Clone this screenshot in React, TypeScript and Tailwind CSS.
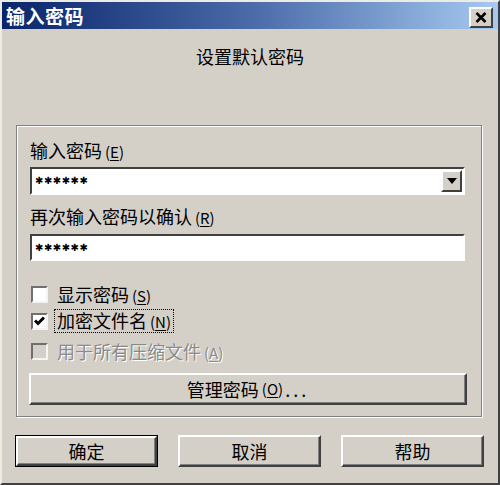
import React from "react";

const cjk = { fontFamily: '"Noto Sans CJK SC", "Noto Sans", sans-serif' };

function Mnemonic({ k }: { k: string }) {
  return (
    <span className="ml-[3px] text-[15px]">
      (<span className="underline underline-offset-2">{k}</span>)
    </span>
  );
}

function Stars() {
  return (
    <span className="pl-[3px] text-[10px] leading-none tracking-[0.5px] text-black" style={{ fontFamily: '"DejaVu Sans", sans-serif' }}>
      ✱✱✱✱✱✱
    </span>
  );
}

function CheckBox({ checked, disabled }: { checked?: boolean; disabled?: boolean }) {
  return (
    <span
      className={`flex h-[17px] w-[17px] shrink-0 items-center justify-center border-2 border-t-[#6f6f6f] border-l-[#6f6f6f] border-r-[#f4f4f4] border-b-[#f4f4f4] ${disabled ? "bg-[#d4d0c8]" : "bg-white"}`}
    >
      {checked && (
        <svg width="11" height="10" viewBox="0 0 11 10">
          <polyline points="1,4.5 4,7.5 10,1.5" fill="none" stroke="#000" strokeWidth="3" />
        </svg>
      )}
    </span>
  );
}

function RaisedButton({ children, className = "", isDefault }: { children: React.ReactNode; className?: string; isDefault?: boolean }) {
  return (
    <div className={`${className} ${isDefault ? "border border-black" : ""}`}>
      <div className="flex h-full w-full items-center justify-center border-2 border-t-white border-l-white border-r-[#404040] border-b-[#404040] bg-[#d4d0c8] text-[18px] text-black shadow-[inset_-1px_-1px_0_#808080]">
        {children}
      </div>
    </div>
  );
}

export default function App() {
  return (
    <div
      className="flex h-[485px] w-[500px] flex-col overflow-hidden border-2 border-t-[#ecebe6] border-l-[#ecebe6] border-r-[#404040] border-b-[#404040] bg-[#d4d0c8] text-black"
      style={cjk}
    >
      {/* title bar */}
      <div className="flex h-[27px] shrink-0 items-center justify-between bg-gradient-to-r from-[#0a246a] via-[#4a6aa8] to-[#a6caf0] pl-[4px] pr-[5px]">
        <span className="text-[19px] font-bold leading-none tracking-[0.5px] text-white">输入密码</span>
        <div className="mt-[4px] flex h-[21px] w-[24px] items-center justify-center border-2 border-t-white border-l-white border-r-[#404040] border-b-[#404040] bg-[#d4d0c8]">
          <svg width="12" height="11" viewBox="0 0 12 11">
            <path d="M1.5 1 L10.5 10 M10.5 1 L1.5 10" stroke="#000" strokeWidth="2.6" />
          </svg>
        </div>
      </div>

      {/* heading */}
      <div className="mt-[15px] text-center text-[18px] leading-[24px]">设置默认密码</div>

      {/* group box */}
      <div className="ml-[14px] mt-[57px] flex h-[292px] w-[466px] flex-col border border-[#808080] pl-[13px] shadow-[inset_1px_1px_0_#fff,1px_1px_0_#fff]">
        <div className="mt-[13px] text-[18px] leading-[22px]">
          输入密码<Mnemonic k="E" />
        </div>
        <div className="mt-[4px] flex h-[28px] w-[435px] items-center border-2 border-t-[#404040] border-l-[#404040] border-r-white border-b-white bg-white">
          <div className="flex flex-1 items-center self-stretch">
            <Stars />
          </div>
          <div className="mr-[1px] flex h-[22px] w-[21px] items-center justify-center border-2 border-t-white border-l-white border-r-[#404040] border-b-[#404040] bg-[#d4d0c8]">
            <svg width="10" height="6" viewBox="0 0 10 6">
              <polygon points="0,0 10,0 5,6" fill="#000" />
            </svg>
          </div>
        </div>

        <div className="mt-[10px] text-[18px] leading-[22px]">
          再次输入密码以确认<Mnemonic k="R" />
        </div>
        <div className="mt-[5px] flex h-[27px] w-[435px] items-center border-2 border-t-[#404040] border-l-[#404040] border-r-white border-b-white bg-white">
          <Stars />
        </div>

        <div className="mt-[21px] flex h-[24px] items-center">
          <span className="ml-[1px]"><CheckBox /></span>
          <span className="ml-[9px] text-[18px] leading-none">
            显示密码<Mnemonic k="S" />
          </span>
        </div>
        <div className="mt-[3px] flex h-[24px] items-center">
          <span className="ml-[1px]"><CheckBox checked /></span>
          <span className="ml-[6px] border border-dotted border-black px-[2px] py-[1px] text-[18px] leading-[18px]">
            加密文件名<Mnemonic k="N" />
          </span>
        </div>
        <div className="mt-[6px] flex h-[24px] items-center">
          <span className="ml-[1px]"><CheckBox disabled /></span>
          <span className="ml-[9px] text-[18px] leading-none text-[#8a8a8a] [text-shadow:1px_1px_0_#fff]">
            用于所有压缩文件<Mnemonic k="A" />
          </span>
        </div>

        <RaisedButton className="mt-[10px] h-[32px] w-[438px] -ml-[1px]">
          管理密码<Mnemonic k="O" />
          <span className="ml-[2px] tracking-[3px]">...</span>
        </RaisedButton>
      </div>

      {/* bottom buttons */}
      <div className="ml-[13px] mt-[18px] flex gap-[20px]">
        <RaisedButton isDefault className="h-[32px] w-[143px]">确定</RaisedButton>
        <RaisedButton className="h-[32px] w-[143px]">取消</RaisedButton>
        <RaisedButton className="h-[32px] w-[143px]">帮助</RaisedButton>
      </div>
    </div>
  );
}
